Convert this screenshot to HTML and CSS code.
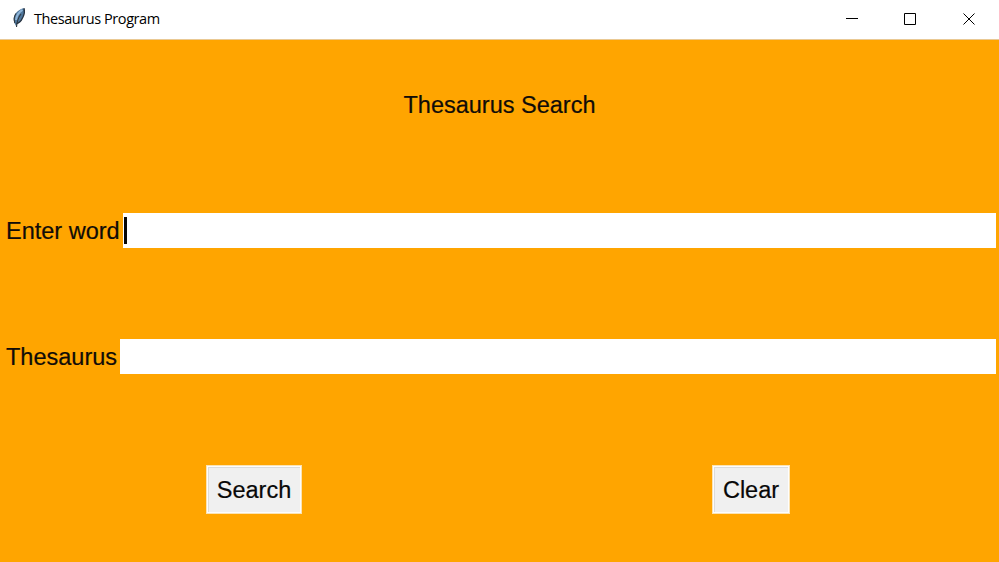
FILE: index.html
```html
<!DOCTYPE html>
<html lang="en">
<head>
<meta charset="utf-8">
<title>Thesaurus Program</title>
<link rel="stylesheet" href="styles.css">
</head>
<body>
<header class="titlebar">
  <svg class="feather" width="16" height="22" viewBox="0 0 16 22" aria-hidden="true">
    <path d="M13 1.200C8.500 1.800 4 5.600 3 10c-.5 2-.3 4 .6 6.200L5.500 20l.8-3.400C8.500 15.500 10.500 13.500 11.200 11.500L12 10C13.300 7 13.800 3 13 1.200Z" fill="#4f779c"/>
    <path d="M11.500 2.800C8 5 5.500 9 5 13" fill="none" stroke="#8fb5d8" stroke-width="2"/>
    <path d="M13 1.200C13.800 4 13.200 7.500 12 10L11.200 11.500C10 14.500 8 16 5.500 16.700" fill="none" stroke="#26313f" stroke-width="1.300"/>
    <path d="M10 7C7.500 10 6 14 5.500 20M3.800 16C2.700 12.500 3.200 9 5 6.500" fill="none" stroke="#303840" stroke-width="1.100"/>
  </svg>
  <span class="caption">Thesaurus Program</span>
  <svg class="controls" width="177" height="39" viewBox="0 0 177 39" fill="none" stroke="#000" aria-hidden="true">
    <path d="M24 18.500H36"/>
    <path d="M82.500 13.500H93.500V24.500H82.500Z"/>
    <path d="M141.500 13.500L152.500 24.500M152.500 13.500L141.500 24.500"/>
  </svg>
</header>
<main class="window">
  <h1 class="heading">Thesaurus Search</h1>
  <div class="row">
    <span class="label">Enter word</span>
    <div class="entry"><span class="caret"></span></div>
  </div>
  <div class="row">
    <span class="label">Thesaurus</span>
    <div class="entry"></div>
  </div>
  <div class="actions">
    <button class="button search">Search</button>
    <button class="button clear">Clear</button>
  </div>
</main>
</body>
</html>
```
FILE: styles.css
```css
* { box-sizing: border-box; }
body {
  margin: 0;
  height: 562px;
  display: flex;
  flex-direction: column;
  overflow: hidden;
  background: #ffa500;
  color: #100c08;
  font-family: "Liberation Sans", Arial, sans-serif;
}
.titlebar {
  height: 40px;
  flex: none;
  display: flex;
  align-items: flex-start;
  background: #fff;
  border-bottom: 1px solid #eac993;
}
.feather { margin: 7px 0 0 11px; }
.caption {
  margin-left: 7px;
  font: 14.500px/38px "Open Sans", "Noto Sans", sans-serif;
  letter-spacing: -0.430px;
  color: #000;
  white-space: nowrap;
}
.controls { margin-left: auto; }
.window {
  flex: 1;
  display: flex;
  flex-direction: column;
  font-size: 23.500px;
  -webkit-text-stroke: 0.200px currentColor;
}
.heading {
  margin: 47px 0 0;
  height: 36px;
  line-height: 36px;
  font-size: inherit;
  font-weight: 400;
  text-align: center;
}
.row {
  display: flex;
  height: 35px;
  margin: 90px 3px 0 6px;
  line-height: 36px;
}
.row + .row { margin-top: 91px; }
.label { white-space: nowrap; margin-right: 3px; }
.entry {
  flex: 1;
  background: #fff;
  padding: 4px 1px;
}
.caret {
  display: block;
  width: 3px;
  height: 27px;
  background: #080808;
}
.actions {
  display: grid;
  grid-template-columns: 508px 1fr;
  justify-items: center;
  margin-top: 91px;
}
.button {
  height: 49px;
  padding: 2px 0 0;
  border: 1px solid #fbe3b4;
  box-shadow: inset 0 0 0 1px #fdfdfd, inset 2px 2px 0 #dcdcdc;
  background: #f0f0f0;
  color: #080808;
  font: inherit;
  line-height: 45px;
}
.search { width: 96px; }
.clear { width: 78px; margin-right: 5px; }
```
